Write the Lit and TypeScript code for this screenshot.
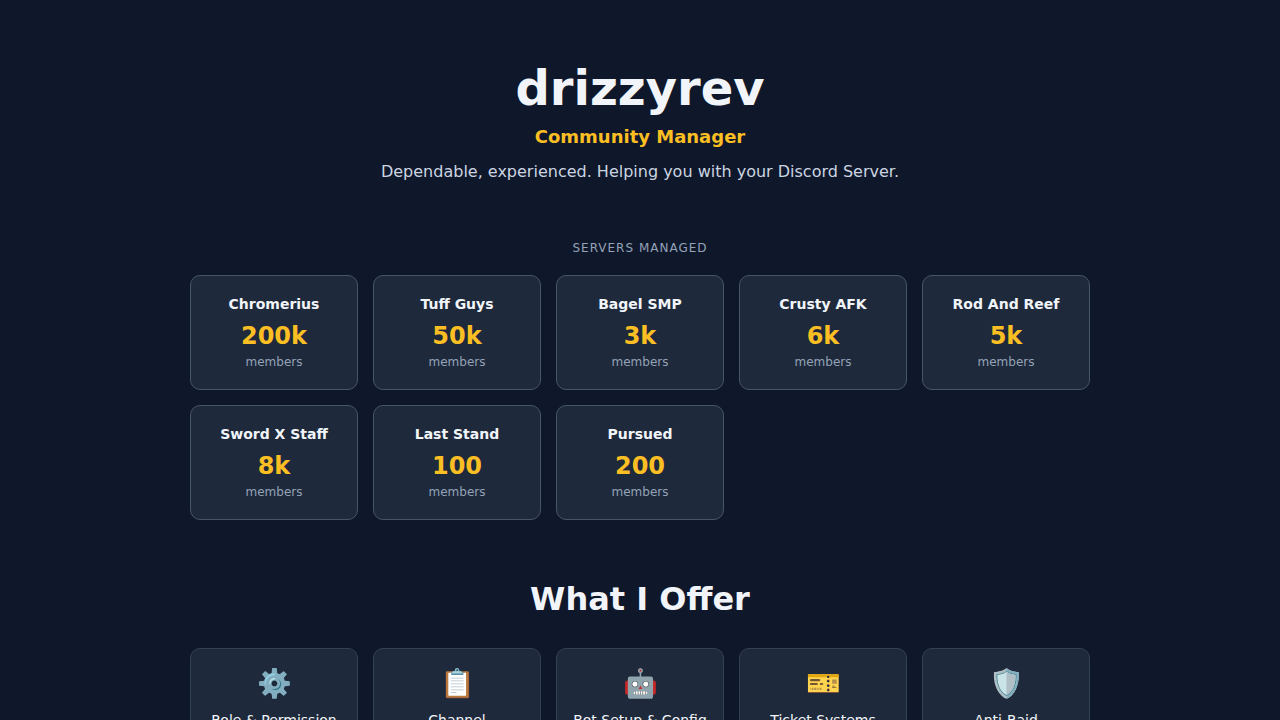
import { LitElement, html, css } from "lit";
import { customElement } from "lit/decorators.js";

const servers: [string, string][] = [
  ["Chromerius", "200k"],
  ["Tuff Guys", "50k"],
  ["Bagel SMP", "3k"],
  ["Crusty AFK", "6k"],
  ["Rod And Reef", "5k"],
  ["Sword X Staff", "8k"],
  ["Last Stand", "100"],
  ["Pursued", "200"],
];

const services: [string, string][] = [
  ["⚙️", "Role & Permission"],
  ["📋", "Channel"],
  ["🤖", "Bot Setup & Config"],
  ["🎫", "Ticket Systems"],
  ["🛡️", "Anti-Raid"],
];

@customElement("app-root")
export class AppRoot extends LitElement {
  static styles = css`
    :host {
      display: block;
      min-height: 100vh;
      background: #0f172a;
      color: #f1f5f9;
      font-family: "DejaVu Sans", sans-serif;
    }
    * {
      box-sizing: border-box;
      margin: 0;
      padding: 0;
    }
    .container {
      max-width: 900px;
      margin: 0 auto;
    }
    .hero {
      padding: 60px 0 56px;
      text-align: center;
    }
    h1 {
      font-size: 48px;
      line-height: 56px;
      margin-bottom: 10px;
    }
    .role {
      font-size: 18px;
      line-height: 21px;
      font-weight: 600;
      color: #fbbf24;
      margin-bottom: 12px;
    }
    .tagline {
      font-size: 16px;
      line-height: 26px;
      color: #cbd5e1;
    }
    .eyebrow {
      font-size: 12px;
      line-height: 14px;
      font-weight: 400;
      letter-spacing: 1px;
      text-transform: uppercase;
      text-align: center;
      color: #94a3b8;
      margin-bottom: 20px;
    }
    .grid {
      display: grid;
      grid-template-columns: repeat(auto-fit, minmax(150px, 1fr));
      gap: 15px;
    }
    .card {
      background: #1e293b;
      border: 1px solid #475569;
      border-radius: 10px;
      padding: 20px 15px;
      text-align: center;
    }
    .name {
      font-size: 14px;
      line-height: 17px;
      margin-bottom: 8px;
    }
    .count {
      font-size: 24px;
      line-height: 30px;
      font-weight: 700;
      color: #fbbf24;
      margin-bottom: 4px;
    }
    .unit {
      font-size: 12px;
      line-height: 14px;
      color: #94a3b8;
    }
    .offer {
      padding: 60px 0;
    }
    h2 {
      font-size: 32px;
      line-height: 38px;
      text-align: center;
      margin-bottom: 30px;
    }
    .service {
      border-color: #334155;
      padding: 18px 15px;
    }
    .icon {
      font-size: 28px;
      line-height: 33px;
      margin-bottom: 10px;
    }
    .label {
      font-size: 14px;
      line-height: 20px;
      font-weight: 500;
      color: #f1f5f9;
    }
  `;

  render() {
    return html`
      <main class="container">
        <header class="hero">
          <h1>drizzyrev</h1>
          <p class="role">Community Manager</p>
          <p class="tagline">Dependable, experienced. Helping you with your Discord Server.</p>
        </header>
        <section>
          <h2 class="eyebrow">Servers Managed</h2>
          <div class="grid">
            ${servers.map(([name, count]) => html`<article class="card">
              <h3 class="name">${name}</h3>
              <p class="count">${count}</p>
              <p class="unit">members</p>
            </article>`)}
          </div>
        </section>
        <section class="offer">
          <h2>What I Offer</h2>
          <div class="grid">
            ${services.map(([icon, label]) => html`<article class="card service">
              <div class="icon" aria-hidden="true">${icon}</div>
              <h3 class="label">${label}</h3>
            </article>`)}
          </div>
        </section>
      </main>
    `;
  }
}
